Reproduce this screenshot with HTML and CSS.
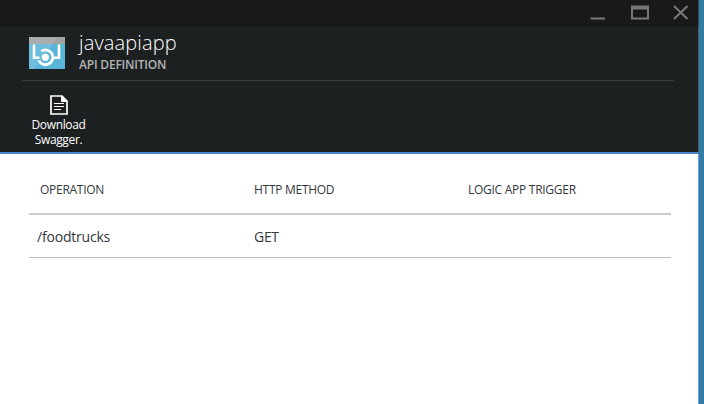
FILE: index.html
```
<!DOCTYPE html>
<html lang="en">
<head>
<meta charset="utf-8">
<title>javaapiapp</title>
<link rel="stylesheet" href="styles.css">
</head>
<body>
<main class="blade">
  <div class="titlebar">
    <svg width="108" height="26" viewBox="0 0 108 26" fill="none" stroke="#777979" stroke-width="2">
      <path d="M0.5 18.5H15"/>
      <path d="M42 7.5H58V18.5H42Z"/><path d="M41 7.5H59" stroke-width="4"/>
      <path d="M84 6L97.500 19M97.500 6L84 19"/>
    </svg>
  </div>
  <header class="header">
    <svg class="logo" width="36" height="32" viewBox="0 0 36 32" fill="none">
      <path fill="#5ab4d9" d="M0 0H36V32H0Z"/>
      <path fill="#a0a1a2" d="M0 0H36V7H0Z"/>
      <path fill="#fff" fill-opacity=".12" d="M0 0H29L5 32H0Z"/>
      <path stroke="#fff" stroke-width="2.600" d="M5 7.500V20.700H10.500"/>
      <path stroke="#fff" stroke-width="2.800" d="M9.800 23.500A7.400 7.400 0 1 0 12.300 14.200"/>
      <path stroke="#fff" stroke-width="2.600" d="M30 7.500V20.700H24"/>
      <circle cx="16.400" cy="20.300" r="3.600" fill="#fff"/>
    </svg>
    <div class="heading">
      <h1><span class="title">javaapiapp</span></h1>
      <h2><span class="subtitle">API DEFINITION</span></h2>
    </div>
  </header>
  <div class="toolbar">
    <div class="command">
      <svg width="18" height="20" viewBox="0 0 18 20" fill="none" stroke="#fff">
        <path stroke-width="1.700" d="M1 1H12L17 6V19H1Z"/>
        <path fill="#fff" d="M11.500 1V6.500H17Z"/>
        <path stroke-width="1.200" d="M4 8.500H14M4 11.500H14M4 14.500H11"/>
      </svg>
      <span class="label">Download<br>Swagger.</span>
    </div>
  </div>
  <section class="content">
    <div class="row row-head">
      <span class="operation">OPERATION</span><span class="method">HTTP METHOD</span><span class="trigger">LOGIC APP TRIGGER</span>
    </div>
    <div class="row row-data">
      <span class="path">/foodtrucks</span><span class="verb">GET</span><span></span>
    </div>
  </section>
</main>
</body>
</html>
```
FILE: styles.css
```
* { box-sizing: border-box; }
body {
  margin: 0;
  height: 404px;
  overflow: hidden;
  background: #327ca5;
  font-family: "Open Sans", "Noto Sans", sans-serif;
}
.blade {
  width: 699px;
  height: 404px;
  display: flex;
  flex-direction: column;
  background: #fff;
}
.titlebar {
  height: 27px;
  display: flex;
  justify-content: flex-end;
  background: #18191a;
  border-right: 1px solid #414446;
}
.header {
  height: 54px;
  display: flex;
  padding-left: 29px;
  background: linear-gradient(#3a3e3f, #3a3e3f) 22px 53px / 652px 1px no-repeat #1d2021;
  border-right: 1px solid #565859;
}
.logo { margin-top: 10px; }
.heading { margin-left: 14px; }
h1, h2 { margin: 0; white-space: nowrap; }
h1 {
  height: 30px;
  font-size: 20px;
  line-height: 31px;
  font-weight: 300;
  color: #fff;
}
h2 {
  height: 16px;
  font-size: 12px;
  line-height: 16px;
  font-weight: 600;
  color: #b4b6b6;
}
.title { letter-spacing: 0.15px; }
.subtitle { letter-spacing: -0.2px; }
.toolbar {
  height: 73px;
  padding: 14px 0 0 22px;
  background: #1d2021;
  border-right: 1px solid #565859;
  border-bottom: 2px solid #4b82cf;
}
.command {
  width: 73px;
  display: flex;
  flex-direction: column;
  align-items: center;
  color: #fff;
  font-size: 12px;
  line-height: 15px;
}
.command svg { margin-bottom: 2px; }
.label { letter-spacing: -0.35px; text-align: center; }
.content {
  flex: 1;
  padding: 0 27px 0 29px;
  border-right: 1px solid #6a9ff5;
}
.row {
  display: grid;
  grid-template-columns: 225px 214px 1fr;
  white-space: nowrap;
  color: #34383c;
}
.row-head {
  height: 61px;
  padding-top: 27px;
  font-size: 12px;
  line-height: 18px;
  border-bottom: 2px solid #cbcccc;
}
.row-data {
  height: 43px;
  padding-top: 12px;
  font-size: 14px;
  line-height: 20px;
  border-bottom: 1px solid #bcbdbe;
}
.operation { padding-left: 11px; letter-spacing: -0.28px; }
.method { letter-spacing: -0.28px; }
.trigger { letter-spacing: -0.27px; }
.path { padding-left: 8px; letter-spacing: -0.2px; }
.verb { letter-spacing: -0.3px; }
```
